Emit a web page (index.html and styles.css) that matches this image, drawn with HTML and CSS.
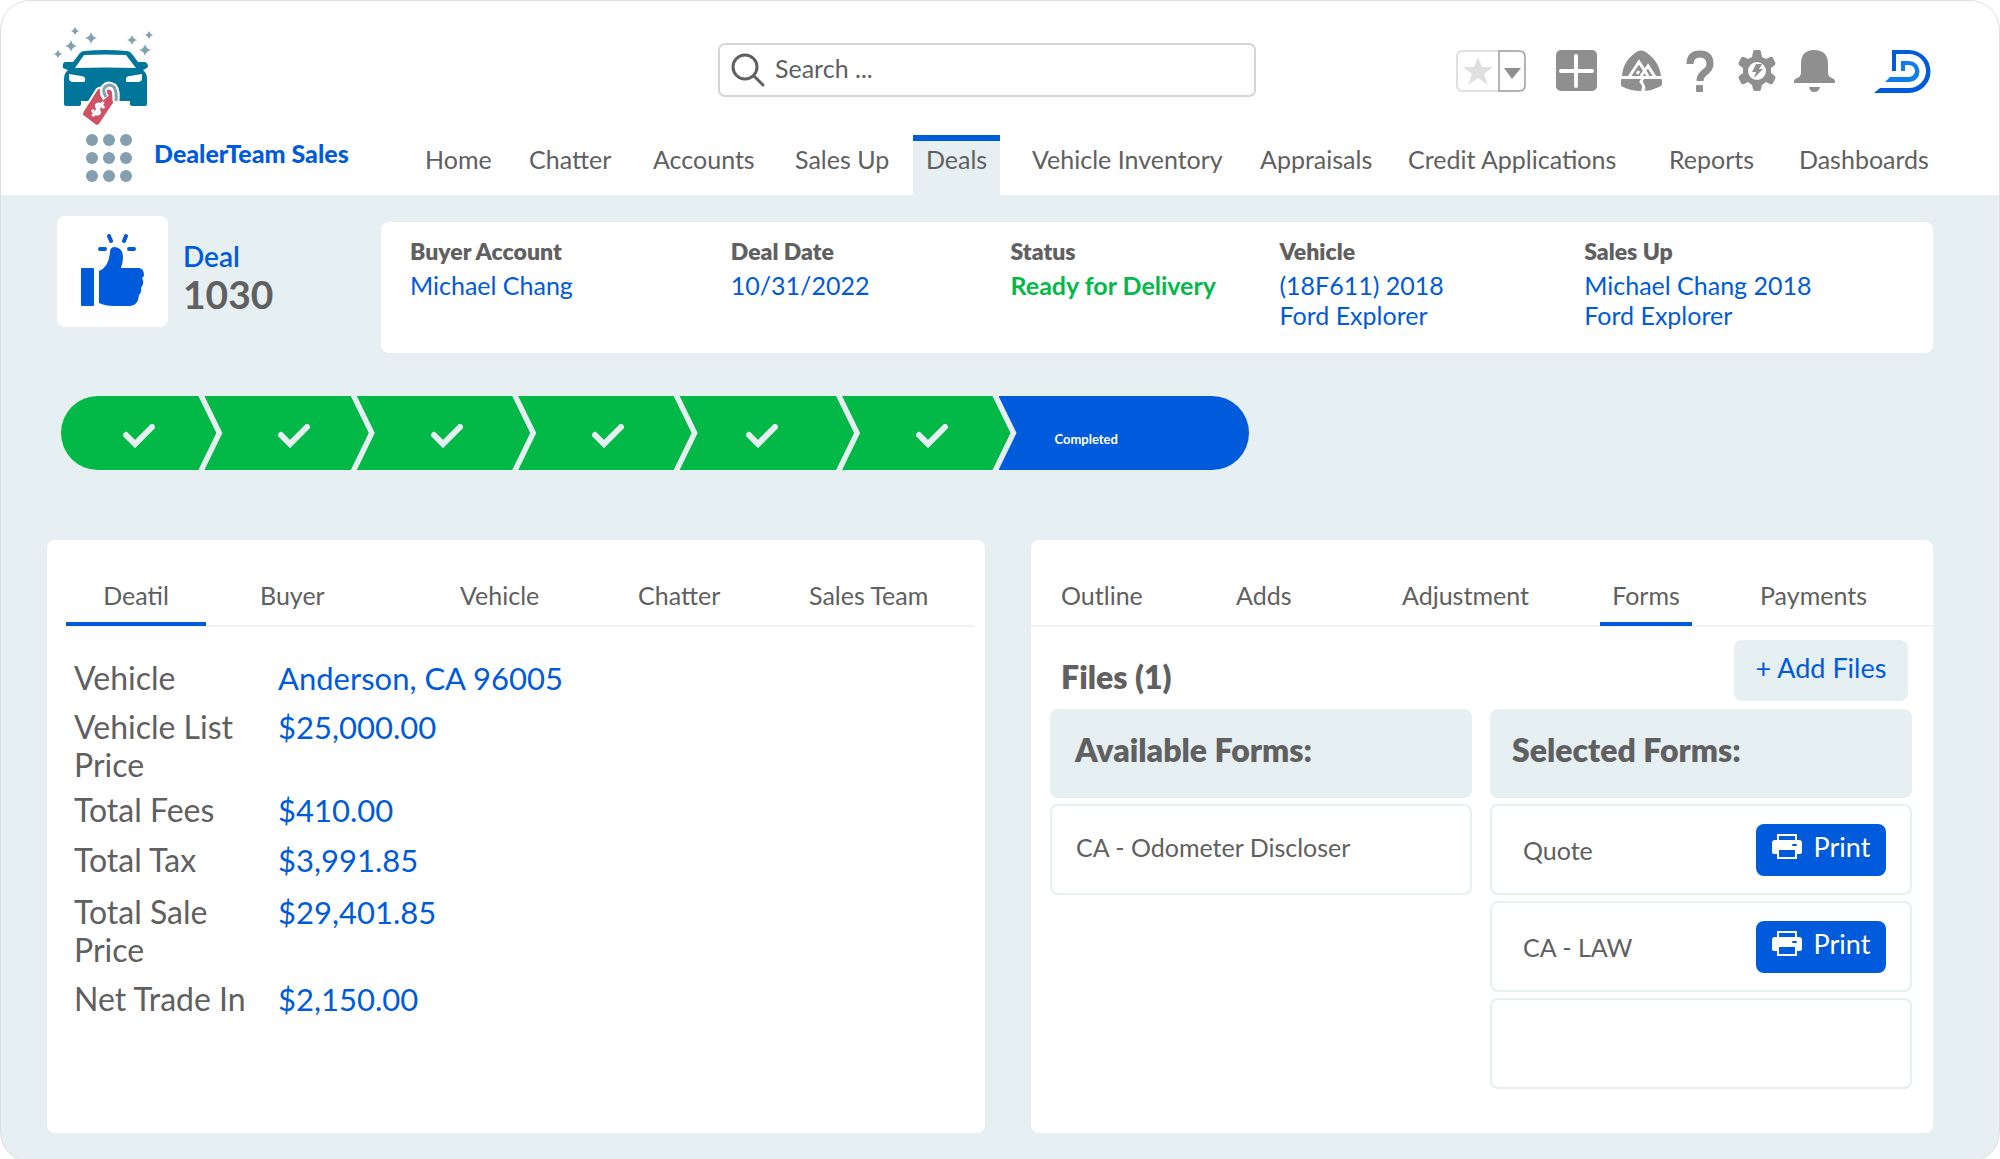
FILE: index.html
```
<!DOCTYPE html>
<html lang="en">
  <head>
    <meta charset="utf-8">
    <title>DealerTeam Sales - Deal 1030</title>
    <link rel="stylesheet" href="styles.css">
  </head>
<body>
<div class="app">

  <header class="header">
    <div class="brand">
      <svg class="car" viewBox="0 0 100 102" width="100" height="102">
        <g fill="#839fb0">
          <path d="M17 13q1 5 6 6q-5 1-6 6q-1-5-6-6q5-1 6-6z"/>
          <path d="M37 5q1 5 6 6q-5 1-6 6q-1-5-6-6q5-1 6-6z"/>
          <path d="M91 17q1 5 6 6q-5 1-6 6q-1-5-6-6q5-1 6-6z"/>
          <path d="M21 0q1 3 4 4q-3 1-4 4q-1-3-4-4q3-1 4-4z"/>
          <path d="M4 23q1 3 4 4q-3 1-4 4q-1-3-4-4q3-1 4-4z"/>
          <path d="M78 8q1 4 5 5q-4 1-5 5q-1-4-5-5q4-1 5-5z"/>
          <path d="M95 4q1 3 4 4q-3 1-4 4q-1-3-4-4q3-1 4-4z"/>
        </g>
        <path fill="#00769b" fill-rule="evenodd" d="M30 24Q51 22 73 24Q76 24 78 27L84 35H91Q94 36 94 40Q92 42 89 43Q93 46 93 52V77Q93 79 91 79H78Q76 79 76 77V74H27V77Q27 79 25 79H12Q10 79 10 77V52Q10 46 14 43Q11 42 9 41Q8 36 11 35H19L26 26Q28 24 30 24zM30 28L21 41Q51 40 82 41L72 28Q51 27 30 28zM15 47L15 52Q15 54 18 55H30Q31 55 31 53V51Q30 49 27 49zM88 47L88 52Q88 54 85 55H73Q72 55 72 53V51Q73 49 76 49z"/>
        <path d="M43 62Q45 60 48 61L57 62Q59 63 59 66L60 76L46 97Q44 100 41 98L29 89Q27 87 29 84z" fill="#cf5264" stroke="#fff" stroke-width="2"/>
        <path d="M52 71Q48 66 50 61Q54 56 60 60Q63 64 62 74" fill="none" stroke="#fff" stroke-width="7"/>
        <path d="M52 70Q48 63 51 60Q56 56 60 60Q63 65 62 74" fill="none" stroke="#839fb0" stroke-width="3"/>
        <g transform="rotate(38 44 82)" fill="none" stroke="#fff" stroke-width="3">
          <path d="M48 78Q44 75 41 78Q39 81 44 82Q49 83 47 86Q44 89 40 86M44 73V91"/>
        </g>
      </svg>
      <div class="app-name">
        <svg viewBox="0 0 46 48" width="46" height="48" fill="#839fb0">
          <circle cx="6" cy="6" r="6"/><circle cx="23" cy="6" r="6"/><circle cx="40" cy="6" r="6"/>
          <circle cx="6" cy="24" r="6"/><circle cx="23" cy="24" r="6"/><circle cx="40" cy="24" r="6"/>
          <circle cx="6" cy="42" r="6"/><circle cx="23" cy="42" r="6"/><circle cx="40" cy="42" r="6"/>
        </svg>
        <strong>DealerTeam Sales</strong>
      </div>
    </div>

    <div class="header-main">
      <div class="tools">
        <label class="search">
          <svg viewBox="0 0 36 36" width="36" height="36" fill="none" stroke="#606060" stroke-width="3" stroke-linecap="round"><circle cx="15" cy="15" r="12"/><path d="M24 24L33 33"/></svg>
          <input type="text" aria-label="Search" placeholder="Search ...">
        </label>

        <div class="icons">
          <button class="favorite" aria-label="Favorites">
            <svg viewBox="0 0 70 42" width="70" height="42">
              <path d="M43 1H7Q1 1 1 7V35Q1 41 7 41H43" fill="none" stroke="#e0e0e0" stroke-width="2"/>
              <path d="M43 1H63Q69 1 69 7V35Q69 41 63 41H43z" fill="none" stroke="#9b9b9b" stroke-width="1.5"/>
              <path d="M22 7L26 17H37L28 24L32 35L22 28L12 35L16 24L7 17H18z" fill="#e0e0e0"/>
              <path d="M48 18H65L56 29z" fill="#8f8f8f"/>
            </svg>
          </button>
          <button aria-label="Add">
            <svg viewBox="0 0 41 41" width="41" height="41"><rect width="41" height="41" rx="5" fill="#8f8f8f"/><path d="M20 6V36M5 21H36" stroke="#fff" stroke-width="4" stroke-linecap="round"/></svg>
          </button>
          <button aria-label="Guidance">
            <svg viewBox="0 0 41 41" width="41" height="41">
              <path d="M1 26Q2 10 17 1Q20 0 23 1Q38 10 40 26zM20 29Q17 32 20 34Q22 36 20 41Q10 41 2 37Q0 36 0 35V30Q0 29 1 29zM23 29H40Q41 29 41 30V35Q40 36 38 37Q32 40 24 41Q25 36 23 34Q21 32 23 29z" fill="#8f8f8f"/>
              <path d="M8 27L18 12L27 26M16 24L18 21M20 26L27 16L34 27" fill="none" stroke="#fff" stroke-width="3"/>
            </svg>
          </button>
          <button aria-label="Help">
            <svg viewBox="0 0 28 42" width="28" height="42"><path d="M4 14Q4 4 14 4Q24 4 24 14Q24 19 18 23Q14 26 14 31" fill="none" stroke="#8f8f8f" stroke-width="7"/><rect x="10" y="35" width="7" height="7" rx="1" fill="#8f8f8f"/></svg>
          </button>
          <button aria-label="Setup">
            <svg viewBox="0 0 38 42" width="38" height="42">
              <path d="M15 2Q15 0 17 0H21Q23 0 23 2L24 7L28 9L32 7Q34 6 35 8L37 12Q38 13 37 15L33 18V23L37 26Q38 28 37 29L35 33Q34 35 32 34L28 32L24 35L23 39Q23 41 21 41H17Q15 41 15 39L14 35L10 32L6 34Q4 35 3 33L1 29Q0 28 1 26L5 23V18L1 15Q0 13 1 12L3 8Q4 6 6 7L10 9L14 7z" fill="#8f8f8f"/>
              <circle cx="19" cy="21" r="9" fill="#fff"/><path d="M18 14H24L21 19H25L16 28L18 22H14z" fill="#8f8f8f"/>
            </svg>
          </button>
          <button class="bell" aria-label="Notifications">
            <svg viewBox="0 0 41 42" width="41" height="42" fill="#8f8f8f"><path d="M7 14Q7 0 20 0Q34 0 34 14V22Q34 27 38 28Q41 29 41 31V33H0V31Q0 29 3 28Q7 27 7 22zM15 37H26Q25 42 20 42Q16 42 15 37z"/></svg>
          </button>
          <a class="logo" href="#" aria-label="DealerTeam">
            <svg viewBox="0 0 57 44" width="57" height="44">
              <path d="M0 43L6 38H35A17 17 0 0 0 35 4H22V21H18V0H35A21 21 0 0 1 35 43z" fill="#005bdc"/>
              <path d="M11 32L16 27H35A6 6 0 0 0 35 15H31V21H27V11H35A10 10 0 0 1 35 32z" fill="#0f7ce8"/>
            </svg>
          </a>
        </div>
      </div>

      <nav class="nav">
        <a href="#">Home</a>
        <a href="#">Chatter</a>
        <a href="#">Accounts</a>
        <a href="#">Sales Up</a>
        <a href="#" class="active">Deals</a>
        <a href="#">Vehicle Inventory</a>
        <a href="#">Appraisals</a>
        <a href="#">Credit Applications</a>
        <a href="#">Reports</a>
        <a href="#">Dashboards</a>
      </nav>
    </div>
  </header>

  <main>
    <section class="deal">
      <div class="deal-icon">
        <svg viewBox="0 0 64 72" width="64" height="72" fill="#005bdc">
          <rect y="34" width="13" height="38" rx="1"/>
          <path d="M18 37Q28 33 29 18Q29 13 34 13Q42 14 42 23Q42 28 40 34H58Q63 35 63 41Q63 43 61 44Q64 49 60 54Q61 58 58 61Q57 72 49 72H33Q24 72 18 69z"/>
          <path d="M28 2L30 7M45 2L43 7M19 15H24M48 15H53" stroke="#005bdc" stroke-width="4" stroke-linecap="round"/>
        </svg>
      </div>
      <h1><span>Deal</span>1030</h1>

      <dl class="summary">
        <div><dt>Buyer Account</dt><dd><a href="#">Michael Chang</a></dd></div>
        <div><dt>Deal Date</dt><dd>10/31/2022</dd></div>
        <div><dt>Status</dt><dd class="ready">Ready for Delivery</dd></div>
        <div><dt>Vehicle</dt><dd><a href="#">(18F611) 2018<br>Ford Explorer</a></dd></div>
        <div><dt>Sales Up</dt><dd><a href="#">Michael Chang 2018<br>Ford Explorer</a></dd></div>
      </dl>
    </section>

    <ol class="steps">
      <li><svg viewBox="0 0 32 25" width="32" height="25"><path d="M3 11L12 20L29 3"/></svg></li>
      <li><svg viewBox="0 0 32 25" width="32" height="25"><path d="M3 11L12 20L29 3"/></svg></li>
      <li><svg viewBox="0 0 32 25" width="32" height="25"><path d="M3 11L12 20L29 3"/></svg></li>
      <li><svg viewBox="0 0 32 25" width="32" height="25"><path d="M3 11L12 20L29 3"/></svg></li>
      <li><svg viewBox="0 0 32 25" width="32" height="25"><path d="M3 11L12 20L29 3"/></svg></li>
      <li><svg viewBox="0 0 32 25" width="32" height="25"><path d="M3 11L12 20L29 3"/></svg></li>
      <li class="current">Completed</li>
    </ol>

    <div class="panels">
      <section class="panel">
        <nav class="tabs detail-tabs">
          <a href="#" class="active">Deatil</a>
          <a href="#">Buyer</a>
          <a href="#">Vehicle</a>
          <a href="#">Chatter</a>
          <a href="#">Sales Team</a>
        </nav>
        <dl class="details">
          <dt>Vehicle</dt><dd>Anderson, CA 96005</dd>
          <dt>Vehicle List Price</dt><dd>$25,000.00</dd>
          <dt>Total Fees</dt><dd>$410.00</dd>
          <dt>Total Tax</dt><dd>$3,991.85</dd>
          <dt>Total Sale Price</dt><dd>$29,401.85</dd>
          <dt>Net Trade In</dt><dd>$2,150.00</dd>
        </dl>
      </section>

      <section class="panel">
        <nav class="tabs form-tabs">
          <a href="#">Outline</a>
          <a href="#">Adds</a>
          <a href="#">Adjustment</a>
          <a href="#" class="active">Forms</a>
          <a href="#">Payments</a>
        </nav>
        <div class="files">
          <div class="files-head">
            <h2>Files (1)</h2>
            <button class="add">+ Add Files</button>
          </div>
          <div class="columns">
            <div class="column">
              <h3>Available Forms:</h3>
              <div class="form-row">CA - Odometer Discloser</div>
            </div>
            <div class="column selected">
              <h3>Selected Forms:</h3>
              <div class="form-row">Quote
                <button class="print"><svg viewBox="0 0 30 28" width="30" height="28"><path d="M6 3H24V9H6z" fill="none" stroke="#fff" stroke-width="2"/><path d="M3 8H27Q30 8 30 11V20Q30 22 28 22H2Q0 22 0 20V11Q0 8 3 8z" fill="#fff"/><path d="M6 17H24V26H6z" fill="#005bdc" stroke="#fff" stroke-width="2"/><path d="M21 13H24" stroke="#005bdc" stroke-width="2" stroke-linecap="round"/></svg>Print</button>
              </div>
              <div class="form-row">CA - LAW
                <button class="print"><svg viewBox="0 0 30 28" width="30" height="28"><path d="M6 3H24V9H6z" fill="none" stroke="#fff" stroke-width="2"/><path d="M3 8H27Q30 8 30 11V20Q30 22 28 22H2Q0 22 0 20V11Q0 8 3 8z" fill="#fff"/><path d="M6 17H24V26H6z" fill="#005bdc" stroke="#fff" stroke-width="2"/><path d="M21 13H24" stroke="#005bdc" stroke-width="2" stroke-linecap="round"/></svg>Print</button>
              </div>
              <div class="form-row"></div>
            </div>
          </div>
        </div>
      </section>
    </div>
  </main>
</div>
</body>
</html>
```
FILE: styles.css
```
* {
  box-sizing: border-box;
}

body {
  margin: 0;
  background: #fff;
  color: #606060;
  font-family: Lato, "Liberation Sans", sans-serif;
  font-size: 25px;
  line-height: 30px;
}

a {
  color: inherit;
  text-decoration: none;
}

button {
  border: 0;
  padding: 0;
  background: none;
  font: inherit;
  cursor: pointer;
}

svg {
  display: block;
}

dl, dd, ol, h1, h2, h3 {
  margin: 0;
  padding: 0;
}

.app {
  min-height: 100vh;
  border: 1px solid #dcdfe1;
  border-radius: 30px;
  background: #e6eff2;
  overflow: hidden;
}

/* Header */
.header {
  display: flex;
  height: 194px;
  background: #fff;
}

.brand {
  width: 411px;
  padding: 26px 0 0 53px;
}

.app-name {
  display: flex;
  gap: 22px;
  padding: 5px 0 0 32px;
  color: #005bdc;
}

.app-name strong {
  padding-top: 4px;
  font-weight: 900;
}

.header-main {
  flex: 1;
  display: flex;
  flex-direction: column;
  justify-content: space-between;
}

.tools {
  display: flex;
  justify-content: space-between;
  padding: 42px 68px 0 306px;
}

.search {
  display: flex;
  align-items: center;
  gap: 9px;
  flex: 0 1 538px;
  height: 54px;
  padding: 0 10px;
  border: 2px solid #d5d5d5;
  border-radius: 7px;
}

.search input {
  flex: 1;
  min-width: 0;
  padding: 0 0 5px;
  border: 0;
  outline: 0;
  background: none;
  color: #606060;
  font: inherit;
}

.search input::placeholder {
  color: #606060;
  opacity: 1;
}

.icons {
  display: flex;
  align-items: flex-start;
  gap: 24px;
  padding-top: 7px;
}

.favorite {
  margin-right: 6px;
}

.bell {
  margin-left: -6px;
}

.logo {
  margin-left: 15px;
}

.nav {
  display: grid;
  grid-template-columns: 104fr 124fr 142fr 131fr 87fr 247fr 148fr 261fr 130fr 213fr;
}

.nav a {
  height: 60px;
  padding: 3px 0 0 13px;
  border-top: 6px solid transparent;
}

.nav a.active {
  border-color: #005bdc;
  background: #e6eff2;
}

.nav a.active + a {
  padding-left: 32px;
}

/* Deal summary */
main {
  padding: 21px 66px 28px 46px;
}

.deal {
  display: flex;
  padding-left: 10px;
}

.deal-icon {
  width: 111px;
  height: 111px;
  padding: 18px 24px;
  border-radius: 8px;
  background: #fff;
}

.deal h1 {
  width: 213px;
  padding: 22px 0 0 15px;
  font-size: 39px;
  font-weight: 700;
  line-height: 40px;
}

.deal h1 span {
  display: block;
  color: #005bdc;
  font-size: 28px;
  font-weight: 600;
  line-height: 36px;
}

.summary {
  flex: 1;
  display: grid;
  grid-template-columns: 321fr 280fr 269fr 305fr 349fr;
  height: 131px;
  margin-top: 6px;
  padding: 14px 0 0 29px;
  border-radius: 8px;
  background: #fff;
}

.summary dt {
  font-size: 23px;
  font-weight: 800;
}

.summary dd {
  padding-top: 4px;
  color: #005bdc;
}

.summary .ready {
  color: #02b947;
  font-weight: 700;
}

/* Progress path */
.steps {
  display: grid;
  grid-template-columns: 143fr 152fr 161fr 161fr 162fr 156fr 250fr;
  width: 63%;
  height: 74px;
  margin: 43px 0 70px 14px;
  list-style: none;
}

/* each arrow reaches into the notch of the next one */
.steps li {
  display: flex;
  align-items: center;
  margin-right: -12px;
  padding: 6px 0 0 74px;
  background: #02b947;
  clip-path: polygon(0 0, calc(100% - 18px) 0, 100% 50%, calc(100% - 18px) 100%, 0 100%, 18px 50%);
}

.steps li:first-child {
  padding-left: 62px;
  border-radius: 37px 0 0 37px;
  clip-path: polygon(0 0, calc(100% - 18px) 0, 100% 50%, calc(100% - 18px) 100%, 0 100%);
}

.steps li:nth-child(5) {
  padding-left: 66px;
}

.steps li.current {
  margin-right: 0;
  padding: 12px 0 0 56px;
  border-radius: 0 37px 37px 0;
  background: #005bdc;
  color: #fff;
  font-size: 13px;
  font-weight: 700;
  clip-path: polygon(0 0, 100% 0, 100% 100%, 0 100%, 18px 50%);
}

.steps path {
  fill: none;
  stroke: #e6eff2;
  stroke-width: 6;
  stroke-linecap: round;
}

/* Panels */
.panels {
  display: grid;
  grid-template-columns: 938fr 902fr;
  gap: 46px;
}

.panel {
  min-height: 593px;
  border-radius: 8px;
  background: #fff;
}

.tabs {
  display: grid;
  height: 87px;
  padding-top: 35px;
  border-bottom: 2px solid #eef3f6;
}

.tabs a {
  height: 51px;
  padding-top: 5px;
}

.tabs a.active {
  border-bottom: 4px solid #005bdc;
  text-align: center;
}

.detail-tabs {
  grid-template-columns: 140fr 54fr 200fr 178fr 171fr 165fr;
  margin: 0 11px 0 19px;
}

.detail-tabs a:nth-child(2) {
  grid-column: 3;
}

.form-tabs {
  grid-template-columns: 175fr 166fr 198fr 92fr 68fr 173fr;
  padding-left: 30px;
}

.form-tabs a:last-child {
  grid-column: 6;
}

.details {
  display: grid;
  grid-template-columns: 174px 1fr;
  grid-template-rows: 49px 83px 50px 52px 87px auto;
  column-gap: 30px;
  padding: 32px 27px;
  font-size: 32px;
  line-height: 38px;
}

.details dd {
  color: #005bdc;
  font-size: 31px;
}

.files {
  padding: 13px 21px 0 19px;
}

.files-head {
  display: flex;
  justify-content: space-between;
  padding: 0 4px 8px 11px;
}

.files h2 {
  padding-top: 18px;
  font-size: 32px;
  font-weight: 800;
  line-height: 38px;
}

.add {
  width: 174px;
  height: 61px;
  padding-bottom: 5px;
  border-radius: 8px;
  background: #e6eff2;
  color: #005bdc;
  font-size: 27px;
}

.columns {
  display: grid;
  grid-template-columns: 1fr 1fr;
  gap: 18px;
}

.column {
  display: flex;
  flex-direction: column;
  gap: 6px;
}

.column h3 {
  height: 89px;
  padding: 22px 25px;
  border-radius: 8px;
  background: #e6eff2;
  font-size: 32px;
  font-weight: 800;
  line-height: 38px;
}

.selected h3 {
  padding-left: 22px;
}

.form-row {
  display: flex;
  justify-content: space-between;
  align-items: center;
  height: 91px;
  padding: 0 24px 6px;
  border: 2px solid #e6eff2;
  border-radius: 8px;
}

.selected .form-row {
  padding: 0 24px 0 31px;
}

.print {
  display: flex;
  justify-content: center;
  gap: 12px;
  width: 130px;
  height: 52px;
  padding-top: 8px;
  border-radius: 8px;
  background: #005bdc;
  color: #fff;
  font-size: 27px;
}
```
